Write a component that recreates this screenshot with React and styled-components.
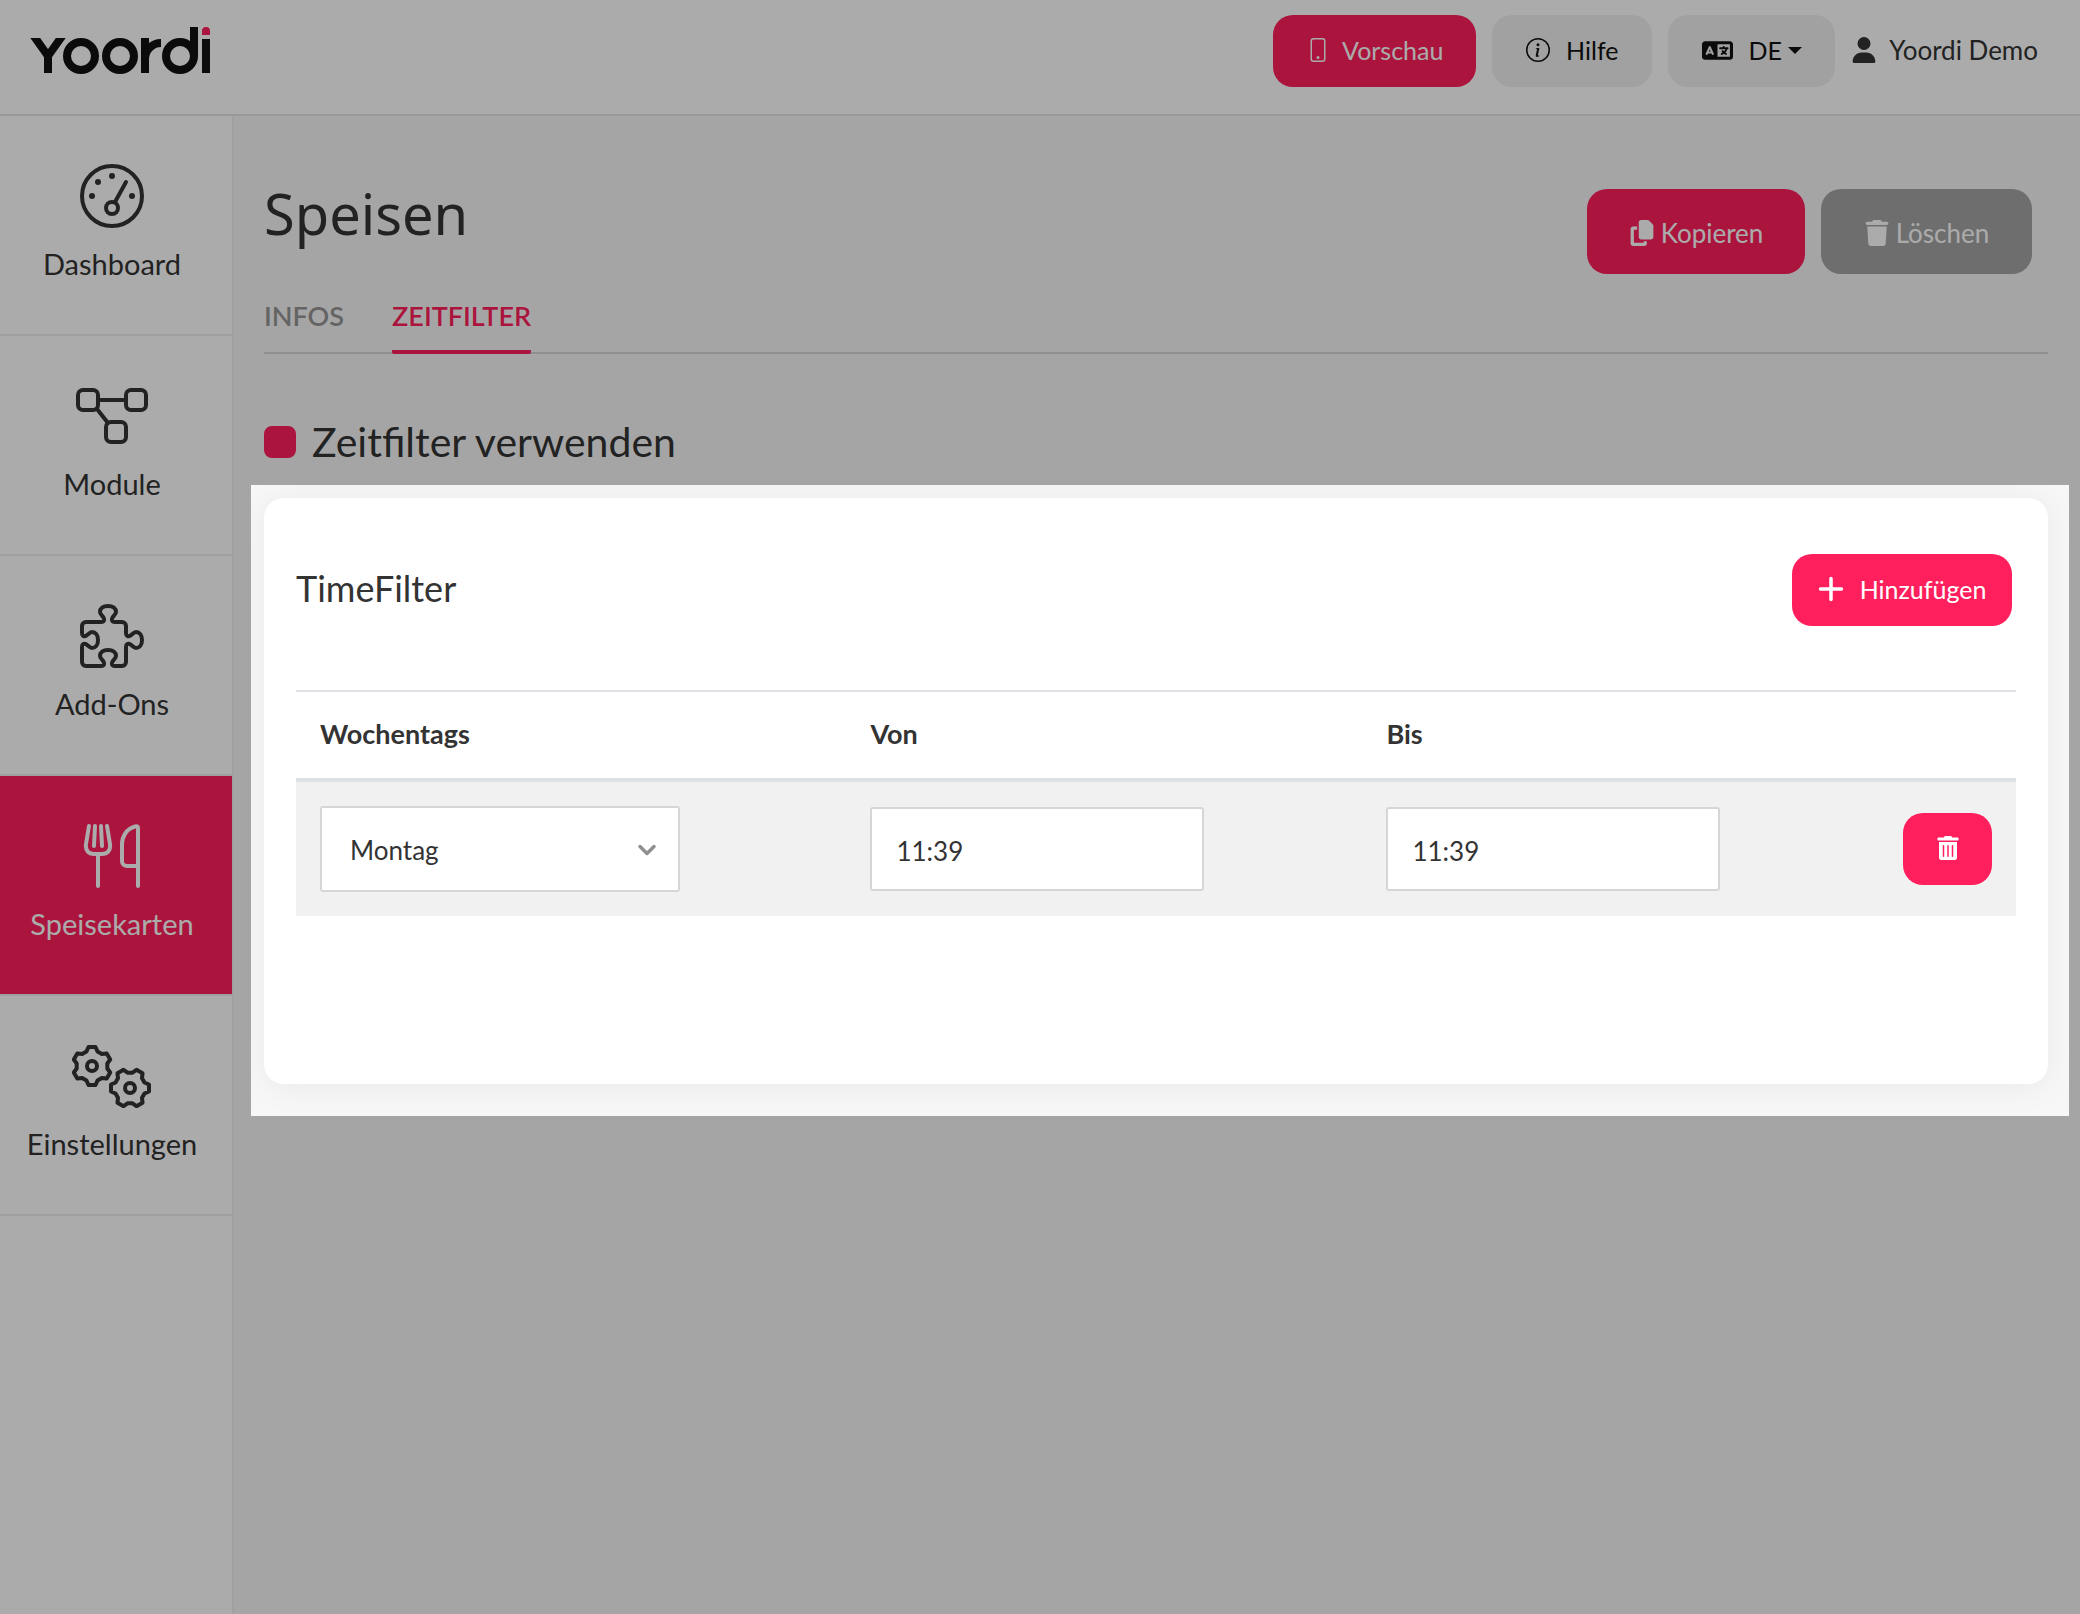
import React, { useState } from "react";
import styled, { createGlobalStyle, css } from "styled-components";
import { BsPhone, BsInfoCircle } from "react-icons/bs";
import { FaTrashAlt } from "react-icons/fa";
import { FaUser, FaCopy, FaTrash, FaLanguage } from "react-icons/fa6";

const color = {
  accent: "#ff1f5c",
  ink: "#333333",
  black: "#111111",
  muted: "#969696",
  page: "#f7f7f7",
  line: "#efefef",
  rule: "#d6d6d6",
  soft: "#f0f0f0",
  table: "#dee2e6",
};

const GlobalStyle = createGlobalStyle`
  *, *::before, *::after { box-sizing: border-box; }
  body {
    margin: 0;
    background: ${color.page};
    color: ${color.ink};
    font: 400 26px/36px Lato, "Noto Sans", sans-serif;
    overflow-x: hidden;
  }
  button, input, select { font: inherit; color: inherit; margin: 0; }
  svg { display: block; flex: none; }
`;

const Page = styled.div`
  min-height: 100vh;
  display: flex;
  flex-direction: column;
`;

const Header = styled.header`
  display: flex;
  align-items: flex-start;
  justify-content: space-between;
  height: 116px;
  padding: 15px 42px 0 28px;
  background: #fff;
  border-bottom: 2px solid #e4e4e4;
`;

const LogoLink = styled.a`
  padding-top: 9px;
`;

const HeaderActions = styled.div`
  display: flex;
  align-items: center;
  gap: 16px;
`;

const variants = {
  accent: css`background: ${color.accent}; color: #fff;`,
  soft: css`background: ${color.soft}; color: ${color.black};`,
  gray: css`background: #a5a5a5; color: #fff;`,
};

const Button = styled.button`
  display: inline-flex;
  align-items: center;
  justify-content: center;
  gap: ${(p) => p.$gap ?? 16}px;
  height: ${(p) => (p.$tall ? 85 : 72)}px;
  min-width: ${(p) => p.$min ?? 0}px;
  padding: ${(p) => (p.$tall ? "2px 24px 0" : "0 24px 2px")};
  border: 0;
  border-radius: 20px;
  font-size: ${(p) => (p.$tall ? 26 : 25)}px;
  cursor: pointer;
  ${(p) => variants[p.$variant ?? "accent"]}
`;

const Caret = styled.span`
  margin-left: -10px;
  border: 7px solid transparent;
  border-top-color: currentColor;
  border-bottom-width: 0;
`;

const UserLink = styled.a`
  display: flex;
  align-items: center;
  gap: 12px;
  padding-bottom: 2px;
  color: ${color.ink};
  text-decoration: none;
`;

const Body = styled.div`
  flex: 1;
  display: flex;
`;

const Sidebar = styled.nav`
  flex: none;
  width: 234px;
  background: #fff;
  border-right: 2px solid ${color.line};
`;

const NavItem = styled.a`
  display: flex;
  flex-direction: column;
  align-items: center;
  gap: 18px;
  height: 220px;
  padding: 48px 8px 0 0;
  border-bottom: 2px solid ${color.line};
  font-size: 29px;
  text-decoration: none;
  color: ${(p) => (p.$active ? "#fff" : color.ink)};
  background: ${(p) => (p.$active ? color.accent : "transparent")};
  background-clip: padding-box;
`;

const Main = styled.main`
  flex: 1;
  min-width: 0;
  padding: 73px 32px 32px 30px;
`;

const TitleRow = styled.div`
  display: flex;
  align-items: flex-start;
  justify-content: space-between;
  padding-right: 16px;
`;

const Title = styled.h1`
  margin: 0;
  font: 400 56px/48px "Noto Sans", sans-serif;
`;

const TitleActions = styled.div`
  display: flex;
  gap: 16px;
`;

const Tabs = styled.div`
  display: flex;
  gap: 48px;
  margin-top: 20px;
  border-bottom: 2px solid ${color.rule};
`;

const Tab = styled.a`
  height: 60px;
  padding-top: 4px;
  margin-bottom: -2px;
  border-bottom: 4px solid ${(p) => (p.$active ? color.accent : "transparent")};
  border-radius: 2px;
  color: ${(p) => (p.$active ? color.accent : color.muted)};
  font-size: 27px;
  font-weight: 600;
  text-decoration: none;
`;

const Toggle = styled.label`
  display: flex;
  align-items: center;
  gap: 16px;
  margin-top: 64px;
  font-size: 41px;
  line-height: 48px;
`;

const Checkbox = styled.input`
  appearance: none;
  width: 32px;
  height: 32px;
  border: 2px solid ${color.accent};
  border-radius: 8px;
  background: #fff;
  &:checked { background: ${color.accent}; }
`;

const Spotlight = styled.section`
  position: relative;
  z-index: 1;
  margin: 19px -21px 0 -13px;
  background: ${color.page};
  box-shadow: 0 0 0 4000px rgba(0, 0, 0, 0.33);
`;

const Clip = styled.div`
  padding: 13px 21px 32px 13px;
  overflow: hidden;
`;

const Card = styled.div`
  min-height: 586px;
  padding: 56px 32px;
  border-radius: 20px;
  background: #fff;
  box-shadow: 0 3px 34px rgba(0, 0, 0, 0.06);
`;

const CardHead = styled.div`
  display: flex;
  align-items: center;
  justify-content: space-between;
  padding-right: 4px;
  margin-bottom: 64px;
`;

const CardTitle = styled.h2`
  margin: 0;
  padding-bottom: 4px;
  font-size: 36px;
  font-weight: 400;
  line-height: 48px;
`;

const Table = styled.table`
  width: 100%;
  table-layout: fixed;
  border-spacing: 0;
`;

const Th = styled.th`
  width: ${(p) => p.$width};
  height: 92px;
  padding: 0 24px 2px;
  border-top: 2px solid ${color.table};
  border-bottom: 4px solid ${color.table};
  font-size: 27px;
  font-weight: 700;
  text-align: left;
`;

const Td = styled.td`
  padding: 24px;
  height: 134px;
  background: #f1f1f1;
  vertical-align: middle;
  text-align: ${(p) => p.$align ?? "left"};
`;

const SelectBox = styled.div`
  position: relative;
  width: 360px;
  max-width: 100%;
  svg {
    position: absolute;
    right: 23px;
    top: 37px;
    pointer-events: none;
  }
`;

const field = css`
  display: block;
  max-width: 100%;
  border: 2px solid ${color.rule};
  border-radius: 3px;
  background: #fff;
`;

const Select = styled.select`
  ${field}
  appearance: none;
  width: 100%;
  height: 86px;
  padding: 2px 56px 0 28px;
`;

const TimeInput = styled.input`
  ${field}
  width: 334px;
  height: 84px;
  padding: 4px 24px 0;
`;

const Logo = () => (
  <svg width="184" height="52" viewBox="28 24 184 52" fill="none" stroke="#111" strokeWidth="8" role="img" aria-label="Yoordi">
    <defs>
      <clipPath id="logo-low">
        <rect x="28" y="38" width="133" height="35" />
      </clipPath>
    </defs>
    <g clipPath="url(#logo-low)">
      <line x1="31" y1="32" x2="48" y2="56" />
      <line x1="65" y1="32" x2="48" y2="56" />
      <line x1="48" y1="54" x2="48" y2="73" />
      <line x1="145" y1="38" x2="145" y2="73" />
      <circle cx="161" cy="59" r="16" strokeDasharray="25.1 100" strokeDashoffset="-50.3" />
    </g>
    <circle cx="81" cy="56" r="14" />
    <circle cx="120" cy="56" r="14" />
    <circle cx="180" cy="56" r="14" />
    <line x1="194" y1="27" x2="194" y2="57" />
    <line x1="206" y1="39" x2="206" y2="73" />
    <g fill={color.accent} stroke="none">
      <circle cx="206" cy="31" r="4" />
      <rect x="202" y="31" width="8" height="4" />
    </g>
  </svg>
);

const NavSvg = ({ children }) => (
  <svg width="80" height="64" viewBox="0 0 80 64" fill="none" stroke="currentColor" strokeWidth="4" strokeLinecap="round" strokeLinejoin="round" aria-hidden="true">
    {children}
  </svg>
);

const DashboardIcon = () => (
  <NavSvg>
    <circle cx="40" cy="32" r="30" />
    <circle cx="40" cy="44" r="6" />
    <line x1="43" y1="38" x2="54" y2="18" />
    <g fill="currentColor" stroke="none">
      <circle cx="40" cy="12" r="3" />
      <circle cx="26" cy="18" r="3" />
      <circle cx="20" cy="32" r="3" />
      <circle cx="60" cy="32" r="3" />
    </g>
  </NavSvg>
);

const ModuleIcon = () => (
  <NavSvg>
    <rect x="6" y="6" width="20" height="20" rx="5" />
    <rect x="54" y="6" width="20" height="20" rx="5" />
    <rect x="34" y="38" width="20" height="20" rx="5" />
    <line x1="26" y1="16" x2="54" y2="16" />
    <line x1="25" y1="25" x2="36" y2="39" />
  </NavSvg>
);

const PuzzleIcon = () => (
  <NavSvg>
    <path d="M10 22a4 4 0 0 1 4-4H29c3 0 4-2 2.500-4.500C30 11.500 28 10 28 8C28 4.500 31 2 36 2s8 2.500 8 6c0 2-2 3.500-3.500 5.500C39 16 40 18 43 18H50a4 4 0 0 1 4 4V29c0 3 2 4 4.500 2.500C60.500 30 62 28 64 28c3.500 0 6 3 6 8s-2.500 8-6 8c-2 0-3.500-2-5.500-3.500C56 39 54 40 54 43V58a4 4 0 0 1-4 4H43c-3 0-4-2-2.500-4.500C42 55.500 44 54 44 52c0-3.500-3-6-8-6s-8 2.500-8 6c0 2 2 3.500 3.500 5.500C33 60 32 62 29 62H14a4 4 0 0 1-4-4V43c0-3 2-4 4.500-2.500C16.500 42 18 44 20 44c3.500 0 6-3 6-8s-2.500-8-6-8c-2 0-3.500 2-5.500 3.500C12 33 10 32 10 29Z" />
  </NavSvg>
);

const CutleryIcon = () => (
  <NavSvg>
    <path d="M17 2L14 20C13 27 17 30 22 30H30C35 30 39 27 38 20L35 2" />
    <path d="M23 2L22 22M29 2L30 22M26 30V62" />
    <path d="M66 62V4C66 2 65 2 63 2.500C54 5 50 13 50 20V37a5 5 0 0 0 5 5H66" />
  </NavSvg>
);

const tooth = [[-5.5, -14.5], [-3.5, -19], [3.5, -19], [5.5, -14.5]];
const gearPoints = (cx, cy, turn) =>
  Array.from({ length: 6 }, (_, i) => {
    const a = ((i * 60 + turn) * Math.PI) / 180;
    return tooth
      .map(([x, y]) =>
        [cx + x * Math.cos(a) - y * Math.sin(a), cy + x * Math.sin(a) + y * Math.cos(a)]
          .map((n) => n.toFixed(2))
          .join(",")
      )
      .join(" ");
  }).join(" ");

const GearsIcon = () => (
  <NavSvg>
    <polygon points={gearPoints(20, 22, 0)} />
    <circle cx="20" cy="22" r="5" />
    <polygon points={gearPoints(58, 44, 30)} />
    <circle cx="58" cy="44" r="5" />
  </NavSvg>
);

const navItems = [
  { label: "Dashboard", Icon: DashboardIcon },
  { label: "Module", Icon: ModuleIcon },
  { label: "Add-Ons", Icon: PuzzleIcon },
  { label: "Speisekarten", Icon: CutleryIcon, active: true },
  { label: "Einstellungen", Icon: GearsIcon },
];

const weekdays = ["Montag", "Dienstag", "Mittwoch", "Donnerstag", "Freitag", "Samstag", "Sonntag"];

export default function App() {
  const [enabled, setEnabled] = useState(true);
  const [slot, setSlot] = useState({ day: "Montag", from: "11:39", to: "11:39" });
  const update = (key) => (e) => setSlot({ ...slot, [key]: e.target.value });

  return (
    <Page>
      <GlobalStyle />
      <Header>
        <LogoLink href="#start"><Logo /></LogoLink>
        <HeaderActions>
          <Button $min={203} $gap={12}><BsPhone size={24} />Vorschau</Button>
          <Button $variant="soft" $min={160}><BsInfoCircle size={24} />Hilfe</Button>
          <Button $variant="soft" $min={167}>
            <FaLanguage size={31} />DE<Caret />
          </Button>
          <UserLink href="#konto"><FaUser size={26} />Yoordi Demo</UserLink>
        </HeaderActions>
      </Header>
      <Body>
        <Sidebar>
          {navItems.map(({ label, Icon, active }) => (
            <NavItem key={label} href={"#" + label.toLowerCase()} $active={active}>
              <Icon />
              {label}
            </NavItem>
          ))}
        </Sidebar>
        <Main>
          <TitleRow>
            <Title>Speisen</Title>
            <TitleActions>
              <Button $tall $min={218} $gap={6}><FaCopy size={26} />Kopieren</Button>
              <Button $tall $min={211} $gap={6} $variant="gray"><FaTrash size={26} />Löschen</Button>
            </TitleActions>
          </TitleRow>
          <Tabs>
            <Tab href="#infos">INFOS</Tab>
            <Tab href="#zeitfilter" $active>ZEITFILTER</Tab>
          </Tabs>
          <Toggle>
            <Checkbox type="checkbox" checked={enabled} onChange={(e) => setEnabled(e.target.checked)} />
            Zeitfilter verwenden
          </Toggle>
          <Spotlight>
            <Clip>
              <Card>
                <CardHead>
                  <CardTitle>TimeFilter</CardTitle>
                  <Button $min={220}>
                    <svg width="26" height="26" viewBox="0 0 26 26" fill="none" stroke="currentColor" strokeWidth="3.500" strokeLinecap="round" aria-hidden="true">
                      <path d="M13 2.500V23.500M2.500 13H23.500" />
                    </svg>
                    Hinzufügen
                  </Button>
                </CardHead>
                <Table>
                  <thead>
                    <tr>
                      <Th $width="32%">Wochentags</Th>
                      <Th $width="30%">Von</Th>
                      <Th $width="30%">Bis</Th>
                      <Th $width="8%" aria-label="Aktion" />
                    </tr>
                  </thead>
                  <tbody>
                    <tr>
                      <Td>
                        <SelectBox>
                          <Select aria-label="Wochentags" value={slot.day} onChange={update("day")}>
                            {weekdays.map((d) => <option key={d}>{d}</option>)}
                          </Select>
                          <svg width="20" height="14" viewBox="0 0 20 14" fill="none" stroke="#8f8f8f" strokeWidth="3.500" strokeLinecap="round" strokeLinejoin="round" aria-hidden="true">
                            <path d="M3 3.500L10 10.500L17 3.500" />
                          </svg>
                        </SelectBox>
                      </Td>
                      <Td><TimeInput aria-label="Von" value={slot.from} onChange={update("from")} /></Td>
                      <Td><TimeInput aria-label="Bis" value={slot.to} onChange={update("to")} /></Td>
                      <Td $align="right">
                        <Button $min={89} aria-label="Zeile entfernen"><FaTrashAlt size={24} /></Button>
                      </Td>
                    </tr>
                  </tbody>
                </Table>
              </Card>
            </Clip>
          </Spotlight>
        </Main>
      </Body>
    </Page>
  );
}
